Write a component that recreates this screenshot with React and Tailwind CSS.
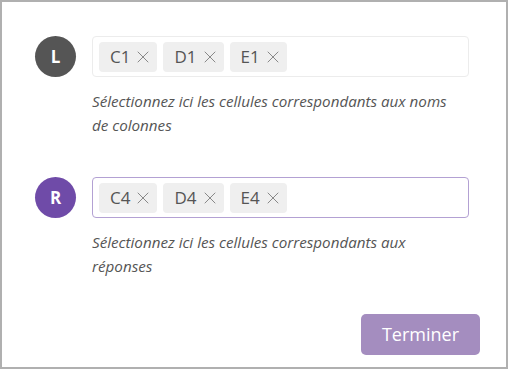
import { X } from "lucide-react";

const Chip = ({ label }) => (
  <span className="flex items-center h-[30px] pl-[11px] pr-[4px] rounded-[4px] bg-[#efefef] text-[17px] text-[#555] gap-[3px]">
    {label}
    <X size={20} strokeWidth={1.2} className="text-[#888]" />
  </span>
);

const Field = ({ letter, color, cells, focused, hint }) => (
  <div className="flex gap-[16px]">
    <div
      className={`w-[41px] h-[41px] rounded-full flex items-center justify-center text-white font-bold text-[17px] shrink-0 ${color}`}
    >
      {letter}
    </div>
    <div className="flex-1">
      <div
        className={`h-[41px] rounded-[4px] border flex items-center gap-[6px] px-[6px] ${
          focused ? "border-[#b3a1d3]" : "border-[#ececec]"
        }`}
      >
        {cells.map((c) => (
          <Chip key={c} label={c} />
        ))}
      </div>
      <p className="mt-[12px] text-[15.2px] italic leading-[24px] text-[#555] w-[368px]">{hint}</p>
    </div>
  </div>
);

export default function App() {
  // frame of the dialog
  return (
    <div
      className="w-[508px] h-[369px] border-2 border-[#b0b0b0] bg-white flex flex-col pl-[33px] pr-[37px] pt-[34px] pb-[12px]"
      style={{ fontFamily: '"Open Sans", sans-serif' }}
    >
      <Field
        letter="L"
        color="bg-[#555555]"
        cells={["C1", "D1", "E1"]}
        hint="Sélectionnez ici les cellules correspondants aux noms de colonnes"
      />
      <div className="h-[40px]" />
      <Field
        letter="R"
        color="bg-[#6f4ba8]"
        cells={["C4", "D4", "E4"]}
        focused
        hint="Sélectionnez ici les cellules correspondants aux réponses"
      />
      <div className="flex-1" />
      <div className="flex justify-end">
        <button className="w-[119px] h-[41px] rounded-[5px] bg-[#a48dbf] text-white text-[18px] -mr-[11px]">
          Terminer
        </button>
      </div>
    </div>
  );
}
